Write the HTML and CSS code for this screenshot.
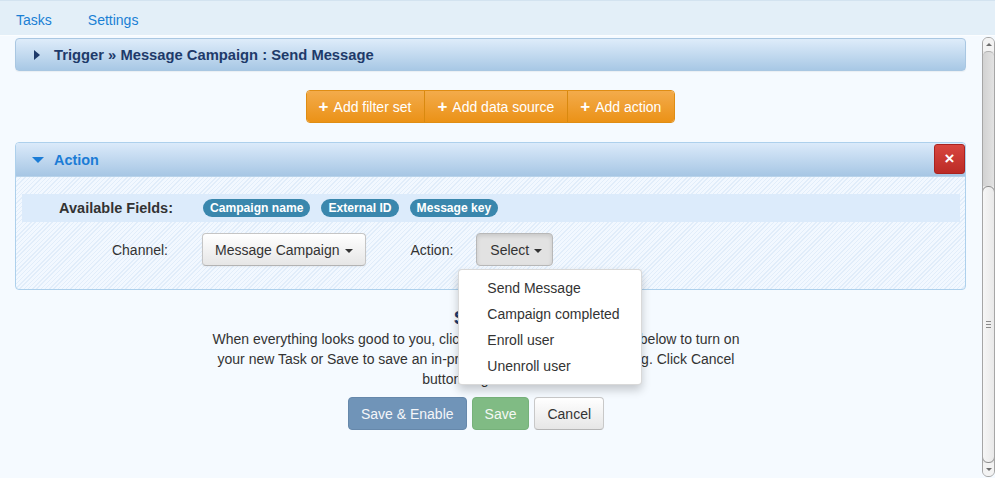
FILE: index.html
```html
<!DOCTYPE html>
<html>
<head>
<meta charset="utf-8">
<link rel="stylesheet" href="styles.css">
</head>
<body>
<div class="nav">
  <a class="nav-link">Tasks</a>
  <a class="nav-link">Settings</a>
</div>
<div class="main">
  <div class="content">
    <div class="trigger-bar">
      <span class="tri-right"></span>
      <span class="trigger-title">Trigger » Message Campaign : Send Message</span>
    </div>

    <div class="btn-group-wrap">
      <div class="btn-group">
        <span class="btn-orange"><span class="plus">+</span> Add filter set</span>
        <span class="btn-orange"><span class="plus">+</span> Add data source</span>
        <span class="btn-orange"><span class="plus">+</span> Add action</span>
      </div>
    </div>

    <div class="panel">
      <div class="panel-head">
        <span class="tri-down"></span>
        <span class="panel-title">Action</span>
        <span class="close-btn">×</span>
      </div>
      <div class="panel-body">
        <div class="fields-row">
          <span class="fields-label">Available Fields:</span>
          <span class="badge">Campaign name</span>
          <span class="badge">External ID</span>
          <span class="badge">Message key</span>
        </div>
        <div class="channel-row">
          <span class="channel-label">Channel:</span>
          <span class="btn-default">Message Campaign <span class="caret"></span></span>
          <span class="action-label">Action:</span>
          <div class="dropdown">
            <span class="btn-default pressed">Select <span class="caret"></span></span>
            <ul class="dropdown-menu">
              <li>Send Message</li>
              <li>Campaign completed</li>
              <li>Enroll user</li>
              <li>Unenroll user</li>
            </ul>
          </div>
        </div>
      </div>
    </div>

    <div class="save-wrap">
      <div class="save-box">
        <h4 class="save-title">Save</h4>
        <p class="save-text">When everything looks good to you, click the Save &amp; Enable buttons below to turn on your new Task or Save to save an in-progress Task, without activating. Click Cancel button to go back</p>
        <div class="save-buttons">
          <span class="btn-enable">Save &amp; Enable</span>
          <span class="btn-save">Save</span>
          <span class="btn-cancel">Cancel</span>
        </div>
      </div>
    </div>
  </div>

  <div class="scrollbar">
    <div class="sb-up"><span class="sb-arrow-up"></span></div>
    <div class="sb-trough"></div>
    <div class="sb-thumb"><span class="grip"></span><span class="grip"></span><span class="grip"></span></div>
    <div class="sb-down"><span class="sb-arrow-down"></span></div>
  </div>
</div>
</body>
</html>
```

FILE: styles.css
```css
* { box-sizing: border-box; }
html, body { margin: 0; padding: 0; }
body {
  width: 995px;
  height: 478px;
  overflow: hidden;
  font-family: "Liberation Sans", Arial, sans-serif;
  font-size: 14px;
  line-height: 20px;
  color: #333;
  background: #f5faff;
}

.nav {
  height: 36px;
  background: #e3eff8;
  border-top: 1px solid #d3e3f0;
  border-bottom: 1px solid #fbfdff;
  display: flex;
  align-items: center;
  padding-left: 16px;
  gap: 36px;
}
.nav-link {
  color: #1a7fd4;
  font-size: 14px;
  padding-top: 3px;
}

.main {
  display: flex;
  height: 442px;
}
.content {
  flex: 1;
  padding: 2px 16px 0 15px;
}

.trigger-bar {
  height: 33px;
  border: 1px solid #a9c7e2;
  border-radius: 4px;
  background: linear-gradient(#deecfa, #a8c8e5);
  display: flex;
  align-items: center;
  padding-left: 18px;
  box-shadow: 0 1px 1px rgba(0,0,0,0.05);
}
.tri-right {
  width: 0; height: 0;
  border-top: 5px solid transparent;
  border-bottom: 5px solid transparent;
  border-left: 6px solid #1e3a6a;
  margin-right: 14px;
}
.trigger-title {
  font-weight: bold;
  color: #1e3a6a;
  font-size: 14.75px;
}

.btn-group-wrap {
  display: flex;
  justify-content: center;
  margin-top: 19px;
}
.btn-group {
  display: flex;
  border: 1px solid #df8d14;
  border-radius: 4px;
  overflow: hidden;
}
.btn-orange {
  display: flex;
  align-items: center;
  height: 31px;
  padding: 0 13px 0 12px;
  color: #fff;
  background: linear-gradient(#f3ab4b, #eb9217);
  font-size: 14px;
}
.btn-orange + .btn-orange { border-left: 1px solid #d9890f; }
.plus {
  font-weight: bold;
  font-size: 17px;
  margin-right: 5px;
}

.panel {
  margin-top: 19px;
  border: 1px solid #add0ec;
  border-radius: 4px;
  background: repeating-linear-gradient(-45deg, #f2f8ff 0, #f2f8ff 2px, #e1edfa 2px, #e1edfa 3px);
  height: 148px;
}
.panel-head {
  height: 34px;
  background: linear-gradient(#dbeafa, #a6c6e4);
  border-bottom: 1px solid #b9d3ea;
  display: flex;
  align-items: center;
  padding-left: 16px;
  border-radius: 3px 3px 0 0;
}
.tri-down {
  width: 0; height: 0;
  border-left: 6px solid transparent;
  border-right: 6px solid transparent;
  border-top: 6px solid #1b7cd6;
  margin-right: 10px;
  margin-top: 1px;
}
.panel-title {
  font-weight: bold;
  color: #1b7cd6;
  font-size: 14.4px;
  flex: 1;
}
.close-btn {
  width: 31px;
  height: 30px;
  align-self: flex-start;
  margin-top: 1px;
  background: linear-gradient(#d8463f, #bb2b26);
  border: 1px solid #a9231f;
  border-radius: 3px;
  color: #fff;
  font-weight: bold;
  font-size: 17px;
  display: flex;
  align-items: center;
  justify-content: center;
}

.panel-body {
  padding: 17px 5px 0 6px;
}
.fields-row {
  height: 28px;
  background: #dcebfb;
  display: flex;
  align-items: center;
}
.fields-label {
  width: 151px;
  text-align: right;
  font-weight: bold;
  font-size: 14.5px;
  color: #333;
  margin-right: 30px;
}
.badge {
  background: #3a87ad;
  color: #fff;
  font-weight: bold;
  font-size: 12.1px;
  line-height: 18px;
  height: 18px;
  padding: 0 7px;
  border-radius: 9px;
  margin-right: 11px;
}

.channel-row {
  display: flex;
  align-items: center;
  margin-top: 11px;
}
.channel-label {
  width: 146px;
  text-align: right;
  margin-right: 34px;
}
.btn-default {
  display: inline-flex;
  align-items: center;
  height: 33px;
  padding: 0 12px 0 12px;
  border: 1px solid #c5c5c5;
  border-bottom-color: #b3b3b3;
  border-radius: 4px;
  background: linear-gradient(#ffffff, #e6e6e6);
  color: #333;
  box-shadow: inset 0 1px 0 rgba(255,255,255,0.2), 0 1px 2px rgba(0,0,0,0.05);
}
.btn-default.pressed {
  background: #e2e2e2;
  border-color: #b8b8b8;
  padding: 0 10px 0 13px;
  box-shadow: inset 0 2px 4px rgba(0,0,0,0.12);
}
.caret {
  display: inline-block;
  width: 0; height: 0;
  border-top: 4px solid #333;
  border-left: 4px solid transparent;
  border-right: 4px solid transparent;
  margin-left: 5px;
  margin-top: 2px;
}
.action-label {
  margin-left: 45px;
  margin-right: 23px;
}
.dropdown { position: relative; }
.dropdown-menu {
  position: absolute;
  top: 36px;
  left: -18px;
  width: 184px;
  margin: 0;
  padding: 5px 0;
  list-style: none;
  background: #fff;
  border: 1px solid rgba(0,0,0,0.15);
  border-radius: 4px;
  box-shadow: 0 5px 10px rgba(0,0,0,0.2);
  z-index: 10;
}
.dropdown-menu li {
  padding: 3px 20px 3px 28px;
  line-height: 20px;
  color: #333;
  white-space: nowrap;
}

.save-wrap {
  display: flex;
  justify-content: center;
  padding-right: 29px;
  margin-top: 16px;
}
.save-box {
  width: 545px;
  text-align: center;
}
.save-title {
  margin: 0;
  font-size: 19px;
  line-height: 23px;
  font-weight: bold;
  color: #1e3a6a;
}
.save-text {
  margin: 0;
  line-height: 20px;
}
.save-buttons {
  display: flex;
  justify-content: center;
  gap: 5px;
  margin-top: 8px;
}
.btn-enable, .btn-save, .btn-cancel {
  height: 33px;
  display: flex;
  align-items: center;
  padding: 0 12px;
  border-radius: 4px;
  border: 1px solid transparent;
}
.btn-enable {
  background: #7094b8;
  border-color: #6688ab;
  color: #f4f6f9;
}
.btn-save {
  background: #80bb84;
  border-color: #76b17a;
  color: #f4f8f4;
}
.btn-cancel {
  background: linear-gradient(#ffffff, #e6e6e6);
  border-color: #c8c8c8;
  border-bottom-color: #b5b5b5;
  color: #333;
}

.scrollbar {
  width: 13px;
  margin-top: 1px;
  height: 440px;
  border: 1px solid #a6a6a6;
  border-radius: 6px;
  background: #e9e9e9;
  display: flex;
  flex-direction: column;
  overflow: hidden;
}
.sb-up, .sb-down {
  height: 13px;
  display: flex;
  align-items: center;
  justify-content: center;
  background: #f3f3f3;
}
.sb-arrow-up {
  width: 0; height: 0;
  border-left: 3px solid transparent;
  border-right: 3px solid transparent;
  border-bottom: 3px solid #6d6d6d;
}
.sb-arrow-down {
  width: 0; height: 0;
  border-left: 3px solid transparent;
  border-right: 3px solid transparent;
  border-top: 3px solid #6d6d6d;
}
.sb-trough {
  height: 135px;
  background: linear-gradient(90deg, #d2d2d2, #e2e2e2);
  border-top: 1px solid #b0b0b0;
  border-radius: 5px 5px 0 0;
}
.sb-thumb {
  flex: 1;
  background: linear-gradient(90deg, #f6f6f6, #e9e9e9);
  border: 1px solid #8e8e8e;
  border-radius: 6px;
  margin: 0 -1px;
  display: flex;
  flex-direction: column;
  align-items: center;
  justify-content: center;
  gap: 2px;
}
.grip {
  width: 5px;
  height: 1px;
  background: #8a8a8a;
}
```
